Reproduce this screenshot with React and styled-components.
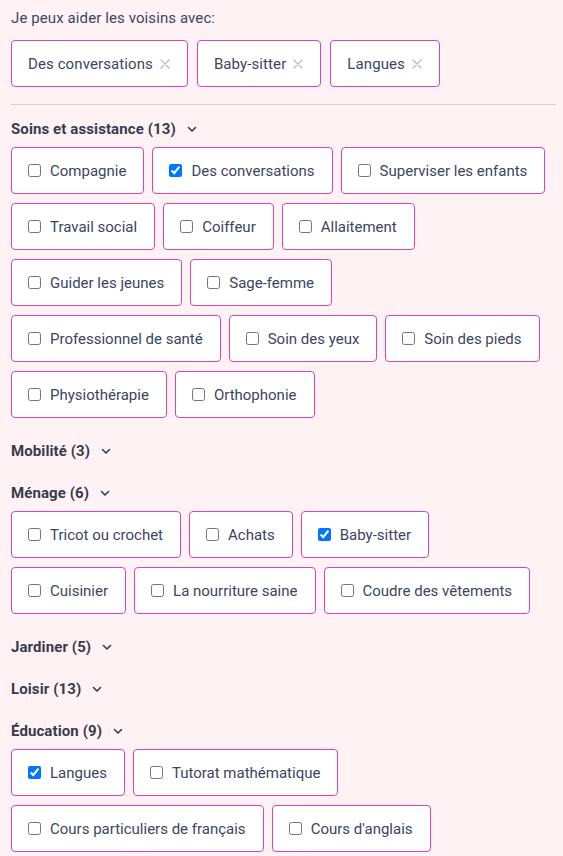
import React from "react";
import styled, { createGlobalStyle } from "styled-components";

const Global = createGlobalStyle`
  html, body { margin: 0; padding: 0; background: #fff2f5; }
  body { font-family: Roboto, "Liberation Sans", sans-serif; color: #3b4660; }
`;

const Page = styled.div`
  padding: 8px 7px 20px 11px;
`;

const Label = styled.div`
  font-size: 15px;
  line-height: 20px;
  letter-spacing: 0.1px;
  color: #3b4660;
`;

const TagRow = styled.div`
  display: flex;
  flex-wrap: wrap;
  gap: 9px;
  margin-top: 12px;
`;

const Tag = styled.div`
  display: flex;
  align-items: center;
  height: 47px;
  box-sizing: border-box;
  padding: 0 17px 0 16px;
  background: #fff;
  border: 1px solid #d946ae;
  border-radius: 4px;
  font-size: 15px;
  letter-spacing: 0.1px;
  color: #3b4660;
`;

const Close = styled.svg`
  margin-left: 7px;
  flex: none;
`;

const Divider = styled.hr`
  border: 0;
  height: 1px;
  background: #d4d0d3;
  margin: 17px 0 0 0;
`;

const Heading = styled.div`
  display: flex;
  align-items: center;
  gap: 11px;
  height: 42px;
  box-sizing: border-box;
  padding: 12px 0 6px;
  font-size: 15px;
  font-weight: 700;
  letter-spacing: 0.1px;
  color: #373c4b;
`;

const Options = styled.div`
  display: flex;
  flex-wrap: wrap;
  gap: 9px 8px;
  padding: 0 9px 9px 0;
`;

const Option = styled.label`
  display: flex;
  align-items: center;
  height: 47px;
  box-sizing: border-box;
  padding: 0 17px 0 16px;
  background: #fff;
  border: 1px solid #d946ae;
  border-radius: 4px;
  font-size: 15px;
  color: #3b4660;
  cursor: pointer;
`;

const Box = styled.input`
  width: 13px;
  height: 13px;
  margin: 0 9px 0 0;
  accent-color: #0075ff;
`;

const Chevron = () => (
  <svg width="10" height="7" viewBox="0 0 10 7" fill="none">
    <path d="M1.5 1.5 L5 5 L8.5 1.5" stroke="#373c4b" strokeWidth="1.6" strokeLinecap="round" strokeLinejoin="round" />
  </svg>
);

const sections = [
  {
    title: "Soins et assistance (13)",
    items: [
      ["Compagnie", false],
      ["Des conversations", true],
      ["Superviser les enfants", false],
      ["Travail social", false],
      ["Coiffeur", false],
      ["Allaitement", false],
      ["Guider les jeunes", false],
      ["Sage-femme", false],
      ["Professionnel de santé", false],
      ["Soin des yeux", false],
      ["Soin des pieds", false],
      ["Physiothérapie", false],
      ["Orthophonie", false],
    ],
  },
  { title: "Mobilité (3)", items: [] },
  {
    title: "Ménage (6)",
    items: [
      ["Tricot ou crochet", false],
      ["Achats", false],
      ["Baby-sitter", true],
      ["Cuisinier", false],
      ["La nourriture saine", false],
      ["Coudre des vêtements", false],
    ],
  },
  { title: "Jardiner (5)", items: [] },
  { title: "Loisir (13)", items: [] },
  {
    title: "Éducation (9)",
    items: [
      ["Langues", true],
      ["Tutorat mathématique", false],
      ["Cours particuliers de français", false],
      ["Cours d'anglais", false],
    ],
  },
];

export default function App() {
  return (
    <Page>
      <Global />
      <Label>Je peux aider les voisins avec:</Label>
      <TagRow>
        {["Des conversations", "Baby-sitter", "Langues"].map((t) => (
          <Tag key={t}>
            {t}
            <Close width="10" height="10" viewBox="0 0 10 10">
              <path d="M1 1 L9 9 M9 1 L1 9" stroke="#b9bdc6" strokeWidth="1.3" strokeLinecap="round" />
            </Close>
          </Tag>
        ))}
      </TagRow>
      <Divider />
      {sections.map((s) => (
        <section key={s.title}>
          <Heading>
            {s.title}
            <Chevron />
          </Heading>
          {s.items.length > 0 && (
            <Options>
              {s.items.map(([name, checked]) => (
                <Option key={name}>
                  <Box type="checkbox" defaultChecked={checked} />
                  {name}
                </Option>
              ))}
            </Options>
          )}
        </section>
      ))}
    </Page>
  );
}
